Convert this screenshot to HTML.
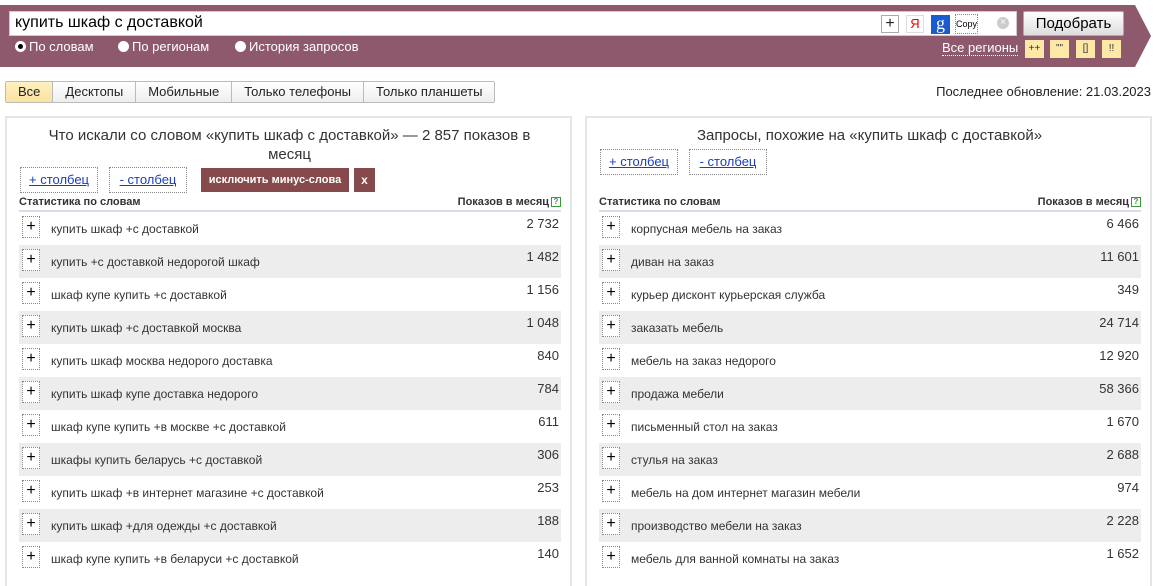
<!DOCTYPE html>
<html><head><meta charset="utf-8"><style>
*{margin:0;padding:0;box-sizing:border-box}
body{width:1160px;height:572px;overflow:hidden;background:#fff;font-family:"Liberation Sans",Arial,sans-serif;color:#222;position:relative;font-size:13px}
.abs{position:absolute}
.band{left:0;top:5px;width:1134px;height:62px;background:#8f596d}
.inp{left:9px;top:11px;width:1008px;height:25px;background:#fff;border:1px solid #ccc;font-size:16px;padding:2px 5px;color:#000}
.btn{left:1023px;top:11px;width:101px;height:25px;background:linear-gradient(#fff,#ddd);border:1px solid #aaa;border-radius:2px;font-size:15px;text-align:center;line-height:23px;color:#000}
.radio{top:39px;color:#fff;font-size:13px}
.radio i{display:inline-block;width:11px;height:11px;border-radius:50%;background:#fff;vertical-align:-1px;margin-right:3px;position:relative}
.radio i.on:after{content:"";position:absolute;left:3px;top:3px;width:5px;height:5px;border-radius:50%;background:#000}
.yb{top:40px;width:19px;height:18px;background:#fde9a6;font-size:10px;text-align:center;line-height:18px;color:#333}
.tabs{left:5px;top:81px;height:22px;display:flex;border:1px solid #bbb;border-radius:2px}
.tabs div{padding:0 12px;line-height:20px;border-right:1px solid #bbb;background:linear-gradient(#fff,#eee);font-size:13px;color:#222}
.tabs div:last-child{border-right:0}
.panel{top:116px;height:470px;border:2px solid #e6e6e6;border-bottom:0}
.title{font-size:15px;color:#333;text-align:center;line-height:19px}
.col{height:26px;border:1px dotted #888;color:#1a3dc1;text-decoration:underline;font-size:13px;line-height:24px;text-align:center}
.hd{font-size:11px;font-weight:bold;color:#333;border-bottom:2px solid #dcdce8;height:16px}
.hd span{position:absolute;right:0;top:0}
.hd b{display:inline-block;width:10px;height:10px;border:1px solid #3a9a3a;color:#3a9a3a;font-size:8px;line-height:8px;text-align:center;margin-left:2px;vertical-align:1px}
.row{position:absolute;left:0;right:0;height:33px;font-size:12px;color:#333}
.row.g{background:#ededed}
.row .p{position:absolute;left:3px;top:4px;width:18px;height:22px;border:1px dotted #888;background:#fff;text-align:center;font-size:16px;line-height:19px;color:#000}
.row .t{position:absolute;left:32px;top:10px}
.row .n{position:absolute;right:2px;top:4px;font-size:13px}
</style></head><body>
<div class="abs band"></div>
<svg class="abs" style="left:1133px;top:5px" width="20" height="62"><polygon points="0,0 2,0 18,31 2,62 0,62" fill="#8f596d"/></svg>
<div class="abs inp">купить шкаф с доставкой</div>
<div class="abs" style="left:881px;top:15px;width:18px;height:18px;border:1px solid #aaa;background:#fff;text-align:center;font-size:16px;line-height:15px">+</div>
<div class="abs" style="left:906px;top:15px;width:18px;height:18px;border:1px solid #ddd;background:#fff;color:#e00;text-align:center;font-size:13px;line-height:16px">Я</div>
<div class="abs" style="left:931px;top:15px;width:19px;height:19px;background:#1a5bd0;color:#fff;text-align:center;font-family:'Liberation Serif',serif;font-size:18px;line-height:17px">g</div>
<div class="abs" style="left:955px;top:14px;width:23px;height:20px;border:1px dotted #888;font-size:9px;line-height:18px;color:#000">Copy</div>
<div class="abs" style="left:997px;top:17px;width:12px;height:12px;border-radius:50%;background:#ccc;color:#fff;font-size:10px;line-height:12px;text-align:center">×</div>
<div class="abs btn">Подобрать</div>
<div class="abs radio" style="left:15px"><i class="on"></i>По словам</div>
<div class="abs radio" style="left:118px"><i></i>По регионам</div>
<div class="abs radio" style="left:235px"><i></i>История запросов</div>
<div class="abs" style="left:942px;top:40px;color:#fff;font-size:13px;border-bottom:1px dotted #fff">Все регионы</div>
<div class="abs yb" style="left:1025px">++</div>
<div class="abs yb" style="left:1050px">""</div>
<div class="abs yb" style="left:1076px">[]</div>
<div class="abs yb" style="left:1102px">!!</div>
<div class="abs tabs"><div style="background:linear-gradient(#fdf0c0,#fbe3a0)">Все</div><div>Десктопы</div><div>Мобильные</div><div>Только телефоны</div><div>Только планшеты</div></div>
<div class="abs" style="right:9px;top:84px;font-size:13px;color:#222">Последнее обновление: 21.03.2023</div>

<div class="abs panel" style="left:5px;width:567px">
 <div class="abs title" style="left:20px;width:525px;top:8px">Что искали со словом «купить шкаф с доставкой» — 2 857 показов в месяц</div>
 <div class="abs col" style="left:13px;top:49px;width:78px">+ столбец</div>
 <div class="abs col" style="left:102px;top:49px;width:78px">- столбец</div>
 <div class="abs" style="left:194px;top:50px;width:148px;height:24px;background:#874a4c;color:#fff;font-size:11px;font-weight:bold;line-height:24px;text-align:center">исключить минус-слова</div>
 <div class="abs" style="left:347px;top:50px;width:21px;height:24px;background:#874a4c;color:#fff;font-size:12px;font-weight:bold;line-height:24px;text-align:center">x</div>
 <div class="abs hd" style="left:12px;width:542px;top:78px">Статистика по словам<span>Показов в месяц<b>?</b></span></div>
 <div class="abs" style="left:12px;width:542px;top:94px">
  <div class="row" style="top:0"><div class="p">+</div><div class="t">купить шкаф +с доставкой</div><div class="n">2 732</div></div>
  <div class="row g" style="top:33px"><div class="p">+</div><div class="t">купить +с доставкой недорогой шкаф</div><div class="n">1 482</div></div>
  <div class="row" style="top:66px"><div class="p">+</div><div class="t">шкаф купе купить +с доставкой</div><div class="n">1 156</div></div>
  <div class="row g" style="top:99px"><div class="p">+</div><div class="t">купить шкаф +с доставкой москва</div><div class="n">1 048</div></div>
  <div class="row" style="top:132px"><div class="p">+</div><div class="t">купить шкаф москва недорого доставка</div><div class="n">840</div></div>
  <div class="row g" style="top:165px"><div class="p">+</div><div class="t">купить шкаф купе доставка недорого</div><div class="n">784</div></div>
  <div class="row" style="top:198px"><div class="p">+</div><div class="t">шкаф купе купить +в москве +с доставкой</div><div class="n">611</div></div>
  <div class="row g" style="top:231px"><div class="p">+</div><div class="t">шкафы купить беларусь +с доставкой</div><div class="n">306</div></div>
  <div class="row" style="top:264px"><div class="p">+</div><div class="t">купить шкаф +в интернет магазине +с доставкой</div><div class="n">253</div></div>
  <div class="row g" style="top:297px"><div class="p">+</div><div class="t">купить шкаф +для одежды +с доставкой</div><div class="n">188</div></div>
  <div class="row" style="top:330px"><div class="p">+</div><div class="t">шкаф купе купить +в беларуси +с доставкой</div><div class="n">140</div></div>
 </div>
</div>

<div class="abs panel" style="left:585px;width:567px">
 <div class="abs title" style="left:20px;width:525px;top:8px">Запросы, похожие на «купить шкаф с доставкой»</div>
 <div class="abs col" style="left:13px;top:31px;width:78px">+ столбец</div>
 <div class="abs col" style="left:102px;top:31px;width:78px">- столбец</div>
 <div class="abs hd" style="left:12px;width:542px;top:78px">Статистика по словам<span>Показов в месяц<b>?</b></span></div>
 <div class="abs" style="left:12px;width:542px;top:94px">
  <div class="row" style="top:0"><div class="p">+</div><div class="t">корпусная мебель на заказ</div><div class="n">6 466</div></div>
  <div class="row g" style="top:33px"><div class="p">+</div><div class="t">диван на заказ</div><div class="n">11 601</div></div>
  <div class="row" style="top:66px"><div class="p">+</div><div class="t">курьер дисконт курьерская служба</div><div class="n">349</div></div>
  <div class="row g" style="top:99px"><div class="p">+</div><div class="t">заказать мебель</div><div class="n">24 714</div></div>
  <div class="row" style="top:132px"><div class="p">+</div><div class="t">мебель на заказ недорого</div><div class="n">12 920</div></div>
  <div class="row g" style="top:165px"><div class="p">+</div><div class="t">продажа мебели</div><div class="n">58 366</div></div>
  <div class="row" style="top:198px"><div class="p">+</div><div class="t">письменный стол на заказ</div><div class="n">1 670</div></div>
  <div class="row g" style="top:231px"><div class="p">+</div><div class="t">стулья на заказ</div><div class="n">2 688</div></div>
  <div class="row" style="top:264px"><div class="p">+</div><div class="t">мебель на дом интернет магазин мебели</div><div class="n">974</div></div>
  <div class="row g" style="top:297px"><div class="p">+</div><div class="t">производство мебели на заказ</div><div class="n">2 228</div></div>
  <div class="row" style="top:330px"><div class="p">+</div><div class="t">мебель для ванной комнаты на заказ</div><div class="n">1 652</div></div>
 </div>
</div>
</body></html>
